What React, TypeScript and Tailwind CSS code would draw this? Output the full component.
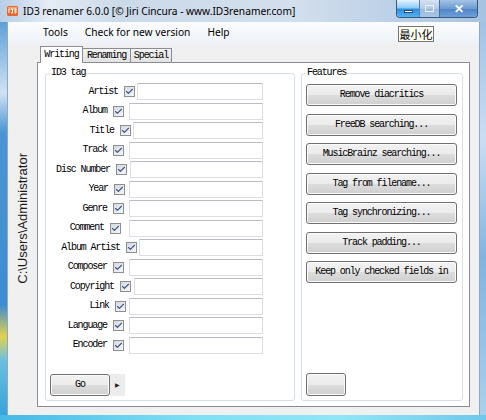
import { Check } from 'lucide-react';

const mono = "font-['Liberation_Mono','Courier_New',monospace] text-[10px] leading-[12px] tracking-[-1.1px] text-black";
const ui = "font-['Noto_Sans','Open_Sans',sans-serif]";
const btn =
  'rounded-[3px] border border-[#707070] bg-[linear-gradient(to_bottom,#f2f2f2_0%,#ebebeb_50%,#dddddd_50%,#cfcfcf_100%)] shadow-[inset_0_0_0_1px_#fbfbfb]';

// label box width puts the checkbox where it sits; ml/w place the text field
const fields = [
  { name: 'Artist', label: 'w-[78px]', box: 'ml-[2px] w-[126px]' },
  { name: 'Album', label: 'w-[67px]', box: 'ml-[5px] w-[134px]' },
  { name: 'Title', label: 'w-[74px]', box: 'ml-[2px] w-[130px]' },
  { name: 'Track', label: 'w-[67px]', box: 'ml-[5px] w-[134px]' },
  { name: 'Disc Number', label: 'w-[70px]', box: 'ml-[3px] w-[133px]' },
  { name: 'Year', label: 'w-[68px]', box: 'ml-[4px] w-[134px]' },
  { name: 'Genre', label: 'w-[67px]', box: 'ml-[5px] w-[134px]' },
  { name: 'Comment', label: 'w-[64px]', box: 'ml-[8px] w-[134px]' },
  { name: 'Album Artist', label: 'w-[80px]', box: 'ml-[2px] w-[124px]' },
  { name: 'Composer', label: 'w-[67px]', box: 'ml-[5px] w-[134px]' },
  { name: 'Copyright', label: 'w-[74px]', box: 'ml-[3px] w-[129px]' },
  { name: 'Link', label: 'w-[69px]', box: 'ml-[3px] w-[134px]' },
  { name: 'Language', label: 'w-[67px]', box: 'ml-[5px] w-[134px]' },
  { name: 'Encoder', label: 'w-[67px]', box: 'ml-[5px] w-[134px]' },
];

const features = [
  'Remove diacritics',
  'FreeDB searching...',
  'MusicBrainz searching...',
  'Tag from filename...',
  'Tag synchronizing...',
  'Track padding...',
  'Keep only checked fields in',
];

function CheckBox() {
  return (
    <div className="flex h-[11px] w-[11px] shrink-0 items-center justify-center border border-[#8e8f8f] bg-[linear-gradient(135deg,#d3d8e0,#f6f7f9)]">
      <Check className="h-[9px] w-[9px] text-[#3d5487]" strokeWidth={3} />
    </div>
  );
}

function AppIcon() {
  return (
    <svg width="11" height="10" viewBox="0 0 11 10">
      <rect x="0" y="0" width="11" height="10" rx="1.5" fill="#e8672c" />
      <rect x="1" y="1" width="9" height="3" fill="#f6a36e" />
      <path d="M2 3 L2 7 M4 3 L5.5 3 L5.5 7 L4 7 M7.5 3 L9 3 L9 5 L7.5 5 L9 5 L9 7 L7.5 7" stroke="#fff" strokeWidth="1" fill="none" />
    </svg>
  );
}

function GroupBox({ title, className, children }: { title: string; className: string; children: React.ReactNode }) {
  return (
    <fieldset className={`flex flex-col rounded-[3px] border border-[#d5dfe5] ${className}`}>
      <legend className={`ml-[4px] px-[1px] ${mono}`}>{title}</legend>
      {children}
    </fieldset>
  );
}

export default function App() {
  return (
    <div className={`relative flex h-[420px] w-[486px] flex-col overflow-hidden ${ui}`}>
      {/* title bar */}
      <div className="flex h-[22px] shrink-0 items-start bg-[linear-gradient(to_right,#b8cde4,#e4ecf5_10%,#cbd9e9_25%,#d3dfec_60%,#a7c3e2)]">
        <div className="ml-[7px] mt-[6px]">
          <AppIcon />
        </div>
        <span className="ml-[5px] mt-[3px] text-[10.2px] leading-[16px] text-black">
          ID3 renamer 6.0.0 [© Jiri Cincura - www.ID3renamer.com]
        </span>
        <div className="ml-auto mr-[8px] flex h-[18px] overflow-hidden rounded-b-[4px] border border-t-0 border-[#38577f]">
          <div className="flex w-[22px] items-center justify-center bg-[linear-gradient(to_bottom,#e6f4ff,#8ecdf5_45%,#2f8ee0_55%,#4fb6f0)]">
            <div className="mt-[5px] h-[3px] w-[9px] border border-[#33465e] bg-white" />
          </div>
          <div className="flex w-[20px] items-center justify-center border-l border-[#5d7ea8] bg-[linear-gradient(to_bottom,#d4e3f3,#b1c9e4_50%,#98b8dc_51%,#a9c7e6)]">
            <div className="h-[7px] w-[9px] border border-[#eef4fb] bg-transparent" />
          </div>
          <div className="flex w-[38px] items-center justify-center border-l border-[#4d6f9a] bg-[linear-gradient(to_bottom,#a5c4e6,#6d9bd2_50%,#4f83c6_51%,#6ea0d8)] text-[12px] font-bold leading-none text-white">
            ✕
          </div>
        </div>
      </div>

      <div className="flex min-h-0 flex-1">
        {/* left frame */}
        <div className="w-[7px] bg-[linear-gradient(to_bottom,#5e9fd8,#cfe3f4_18%,#4a95d5_28%,#3b8dd1_72%,#e2d24c_80%,#6cc0e0_86%,#36a2dc)]" />

        {/* client */}
        <div className="flex w-[473px] flex-col border-x border-[#8ea9c8] bg-[#f0f0f0]">
          {/* menu */}
          <div className="flex h-[22px] shrink-0 items-center gap-[17px] bg-[linear-gradient(to_bottom,#fbfcfe,#eef2f7)] pl-[35px] text-[10.2px] text-black">
            <span>Tools</span>
            <span>Check for new version</span>
            <span>Help</span>
          </div>

          <div className="flex flex-1 pb-[8px] pt-[2px]">
            {/* path column */}
            <div className="flex w-[29px] items-center justify-center pb-[16px]">
              <span className="rotate-180 font-['Liberation_Sans',Arial,sans-serif] text-[13px] leading-none text-[#1a1a1a] [writing-mode:vertical-rl]">
                C:\Users\Administrator
              </span>
            </div>

            {/* tab control */}
            <div className="flex w-[433px] flex-col">
              <div className="flex h-[16px] items-end pl-[3px]">
                <div className={`relative z-10 -mb-px flex h-[17px] w-[43px] items-center justify-center border border-b-0 border-[#898c95] bg-white pb-[1px] ${mono}`}>
                  Writing
                </div>
                <div className={`flex h-[14px] w-[48px] items-center justify-center border border-b-0 border-l-0 border-[#898c95] bg-[linear-gradient(to_bottom,#f3f3f3,#e2e2e2)] ${mono}`}>
                  Renaming
                </div>
                <div className={`flex h-[14px] w-[41px] items-center justify-center border border-b-0 border-l-0 border-[#898c95] bg-[linear-gradient(to_bottom,#f3f3f3,#e2e2e2)] ${mono}`}>
                  Special
                </div>
              </div>

              <div className="flex flex-1 gap-[6px] border border-[#898c95] bg-white pb-[5px] pl-[7px] pr-[6px] pt-[4px]">
                <GroupBox title="ID3 tag" className="w-[250px] pt-[3px]">
                  {fields.map((f) => (
                    <div key={f.name} className="flex h-[19.5px] items-center">
                      <div className={`${f.label} whitespace-nowrap pr-[6px] text-right ${mono}`}>{f.name}</div>
                      <CheckBox />
                      <div className={`${f.box} h-[17px] border border-[#dcdee3] border-t-[#b9bcc3] bg-white`} />
                    </div>
                  ))}
                  <div className="mb-[4px] ml-[4px] mt-auto flex h-[22px]">
                    <div className={`flex w-[60px] items-center justify-center ${btn} ${mono}`}>Go</div>
                    <div className="flex w-[15px] items-center justify-center bg-[#ececec] text-[6px] text-[#222]">▶</div>
                  </div>
                </GroupBox>

                <GroupBox title="Features" className="flex-1 pt-[5px]">
                  <div className="ml-[4px] flex w-[151px] flex-col gap-[7.5px]">
                    {features.map((f) => (
                      <div key={f} className={`flex h-[22px] items-center justify-center whitespace-nowrap ${btn} ${mono}`}>
                        {f}
                      </div>
                    ))}
                  </div>
                  <div className={`mb-[4px] ml-[4px] mt-auto h-[23px] w-[40px] ${btn}`} />
                </GroupBox>
              </div>
            </div>
          </div>
        </div>

        {/* right frame */}
        <div className="w-[6px] bg-[linear-gradient(to_bottom,#9ec3e8,#c9def2_30%,#7fb4e2_60%,#a9d0ee)]" />
      </div>

      {/* bottom frame */}
      <div className="h-[5px] shrink-0 bg-[linear-gradient(to_right,#47b9e6,#7fe0f4_40%,#8fe6f6_70%,#6fc8ec)]" />

      {/* tooltip */}
      <div className="absolute left-[398px] top-[26px] flex h-[16px] w-[36px] items-center justify-center border border-[#767676] bg-[#fdfdf2] font-['Noto_Sans_CJK_SC',sans-serif] text-[11px] leading-none text-black">
        最小化
      </div>
    </div>
  );
}
